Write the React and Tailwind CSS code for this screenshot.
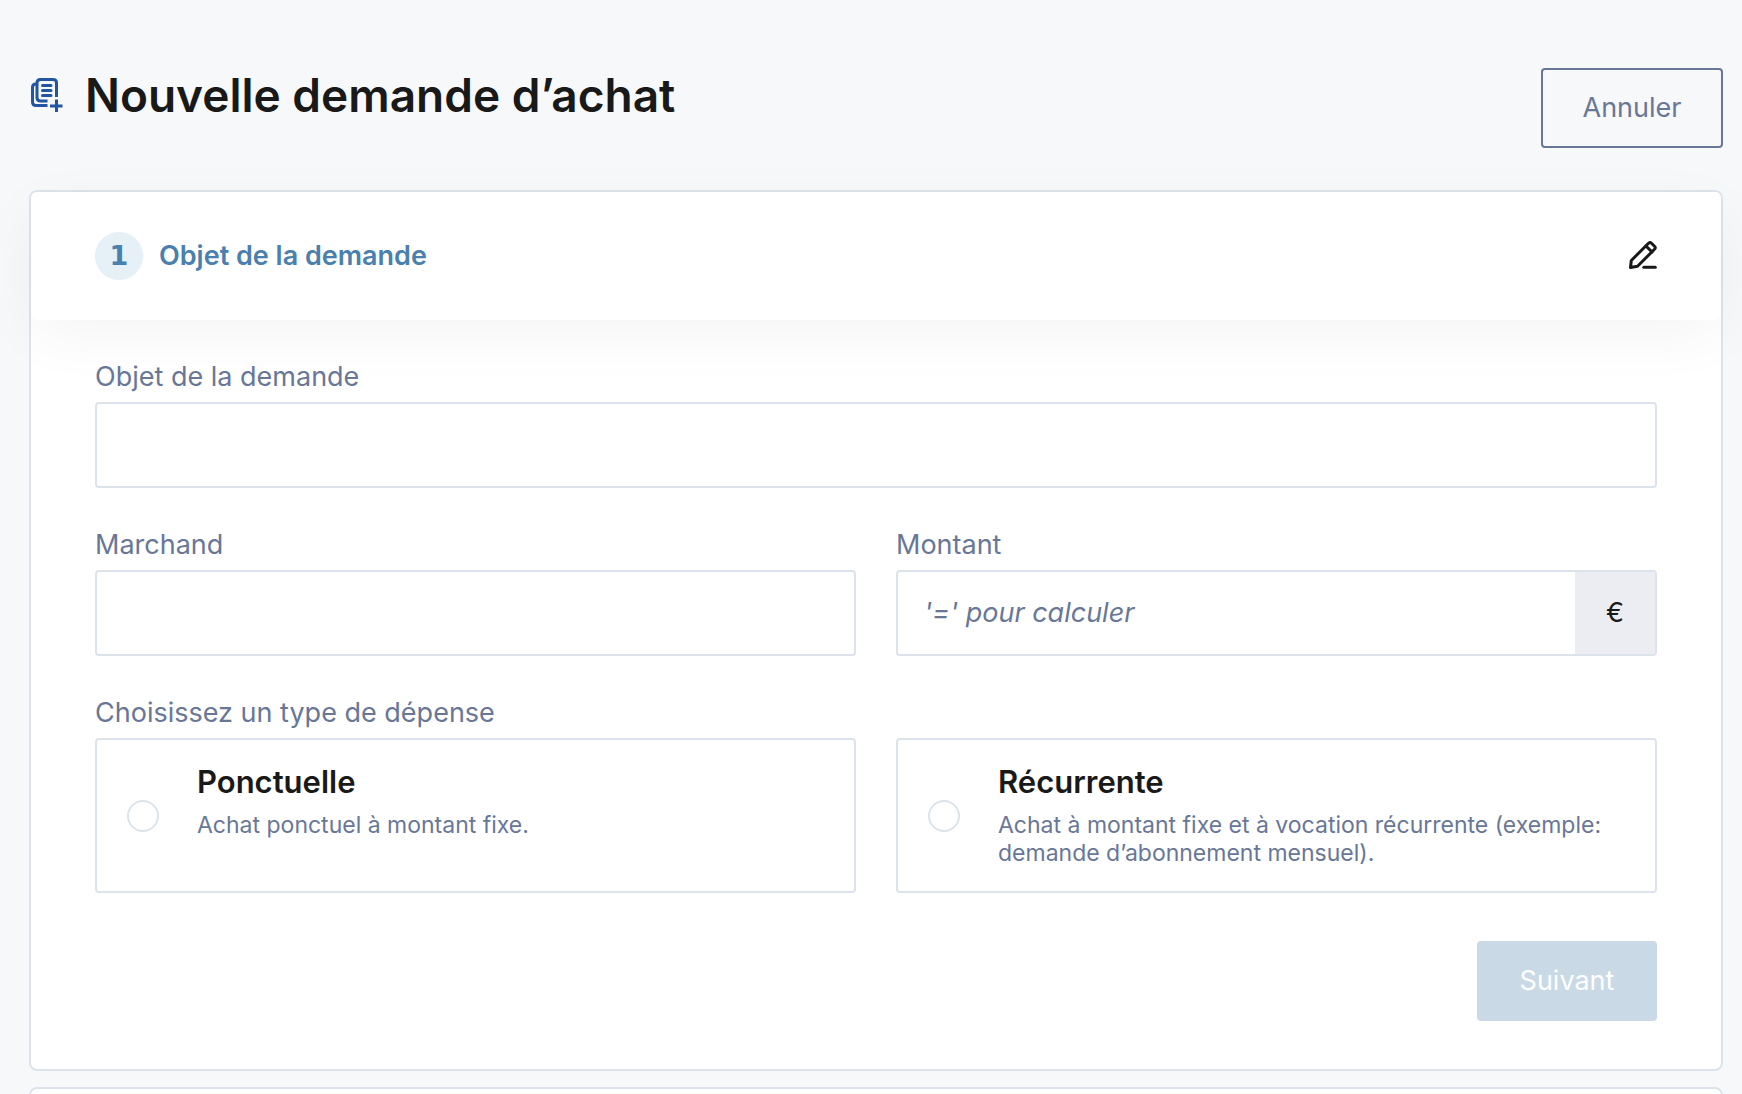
import React, { useState } from "react";

const expenseTypes = [
  {
    id: "ponctuelle",
    name: "Ponctuelle",
    description: "Achat ponctuel à montant fixe."
  },
  {
    id: "recurrente",
    name: "Récurrente",
    description:
      "Achat à montant fixe et à vocation récurrente (exemple: demande d’abonnement mensuel)."
  }
];

function RequestIcon() {
  return (
    <svg
      width="34"
      height="34"
      viewBox="-2 0 34 34"
      fill="none"
      stroke="currentColor"
      strokeWidth="3"
      className="shrink-0 text-[#2356a0]"
      aria-hidden="true"
    >
      <path d="M25.500 19V5Q25.500 1.500 22 1.500H9.500Q6 1.500 6 5V19.500Q6 23 9.500 23H16.500" />
      <path d="M6 6H5Q1.500 6 1.500 9.500V24Q1.500 27.500 5 27.500H16.500" />
      <path d="M11.500 7.500H20M11.500 12.500H20M11.500 17.500H20" strokeLinecap="round" />
      <path d="M25.500 21.500V34M19 28H31.500" />
    </svg>
  );
}

function EditIcon() {
  return (
    <svg
      width="28"
      height="30"
      viewBox="0 0 28 30"
      fill="none"
      stroke="currentColor"
      strokeWidth="3"
      strokeLinecap="round"
      strokeLinejoin="round"
      aria-hidden="true"
    >
      <path d="M1.500 26.500L2.300 19.500L19.500 2.300Q21 .8 22.500 2.300L25.500 5.300Q27 6.800 25.500 8.300L8.500 25.200Z" />
      <path d="M17 5L23 11" />
      <path d="M14.800 26.300H26.300" />
    </svg>
  );
}

export default function App() {
  const [formData, setFormData] = useState({
    subject: "",
    merchant: "",
    amount: "",
    type: ""
  });

  const handleChange = e => {
    const { name, value } = e.target;

    setFormData(prev => ({
      ...prev,
      [name]: value
    }));
  };

  const complete = Object.values(formData).every(v => v !== "");

  return (
    <div className="h-screen overflow-hidden bg-[#f7f8fa] pt-[68px] pr-[19px] pl-[29px] font-['Inter',sans-serif] text-[27px] leading-[34px] text-[#687797]">

      {/* Header */}
      <header className="flex items-start justify-between mb-[42px]">
        <div className="flex items-center gap-[22px] h-[54px]">
          <RequestIcon />
          <h1 className="text-[46px] leading-[54px] font-semibold text-[#191919]">
            Nouvelle demande d’achat
          </h1>
        </div>

        <button
          type="button"
          className="h-20 min-w-[182px] px-8 border-2 border-[#687797] rounded-[4px]"
        >
          Annuler
        </button>
      </header>

      <section className="bg-white border-2 border-[#dce3eb] rounded-[8px] mb-4">

        {/* Step title */}
        <div className="flex items-center justify-between h-32 px-16 bg-white rounded-[6px] shadow-[0_16px_60px_rgba(0,0,0,0.045)]">
          <h2 className="flex items-center gap-4 font-semibold text-[#4a80ad]">
            <span className="flex items-center justify-center size-12 rounded-full bg-[#e5f0f7] font-['DejaVu_Sans',sans-serif]">
              1
            </span>
            Objet de la demande
          </h2>

          <button type="button" aria-label="Modifier" className="text-[#191919]">
            <EditIcon />
          </button>
        </div>

        <form onSubmit={e => e.preventDefault()} className="px-16 pt-10 pb-12">

          {/* Subject */}
          <div className="mb-10">
            <label htmlFor="subject" className="block mb-2">
              Objet de la demande
            </label>

            <input
              id="subject"
              name="subject"
              value={formData.subject}
              onChange={handleChange}
              className="block w-full h-[86px] px-[26px] bg-white border-2 border-[#dce3eb] rounded-[4px]"
            />
          </div>

          <div className="grid grid-cols-2 gap-10 mb-10">
            {/* Merchant */}
            <div>
              <label htmlFor="merchant" className="block mb-2">
                Marchand
              </label>

              <input
                id="merchant"
                name="merchant"
                value={formData.merchant}
                onChange={handleChange}
                className="block w-full h-[86px] px-[26px] bg-white border-2 border-[#dce3eb] rounded-[4px]"
              />
            </div>

            {/* Amount */}
            <div>
              <label htmlFor="amount" className="block mb-2">
                Montant
              </label>

              <div className="flex h-[86px] bg-white border-2 border-[#dce3eb] rounded-[4px]">
                <input
                  id="amount"
                  name="amount"
                  value={formData.amount}
                  onChange={handleChange}
                  placeholder="'=' pour calculer"
                  className="flex-1 min-w-0 px-[26px] placeholder:italic placeholder:text-[#687797]"
                />
                <span className="flex items-center justify-center w-20 bg-[#ecedf2] text-[#191919]">
                  €
                </span>
              </div>
            </div>
          </div>

          {/* Expense type */}
          <fieldset>
            <legend className="mb-2">Choisissez un type de dépense</legend>

            <div className="grid grid-cols-2 gap-10">
              {expenseTypes.map(type => (
                <label
                  key={type.id}
                  htmlFor={type.id}
                  className="flex items-center gap-[38px] px-[30px] py-6 border-2 border-[#dce3eb] rounded-[4px]"
                >
                  <input
                    id={type.id}
                    type="radio"
                    name="type"
                    value={type.id}
                    checked={formData.type === type.id}
                    onChange={handleChange}
                    className="appearance-none shrink-0 size-8 border-2 border-[#dce3eb] rounded-full checked:border-8 checked:border-[#4a80ad]"
                  />
                  <span className="self-start">
                    <span className="block mb-[11px] text-[31px] leading-9 font-semibold text-[#191919]">
                      {type.name}
                    </span>
                    <span className="block text-[23px] leading-7">
                      {type.description}
                    </span>
                  </span>
                </label>
              ))}
            </div>
          </fieldset>

          <div className="flex justify-end mt-12">
            <button
              type="submit"
              disabled={!complete}
              className="h-20 min-w-[180px] px-8 bg-[#4a80ad] disabled:bg-[#c9d9e6] text-white rounded-[4px]"
            >
              Suivant
            </button>
          </div>
        </form>
      </section>

      {/* Next step */}
      <section className="h-32 bg-white border-2 border-[#dce3eb] rounded-[8px]" />
    </div>
  );
}
